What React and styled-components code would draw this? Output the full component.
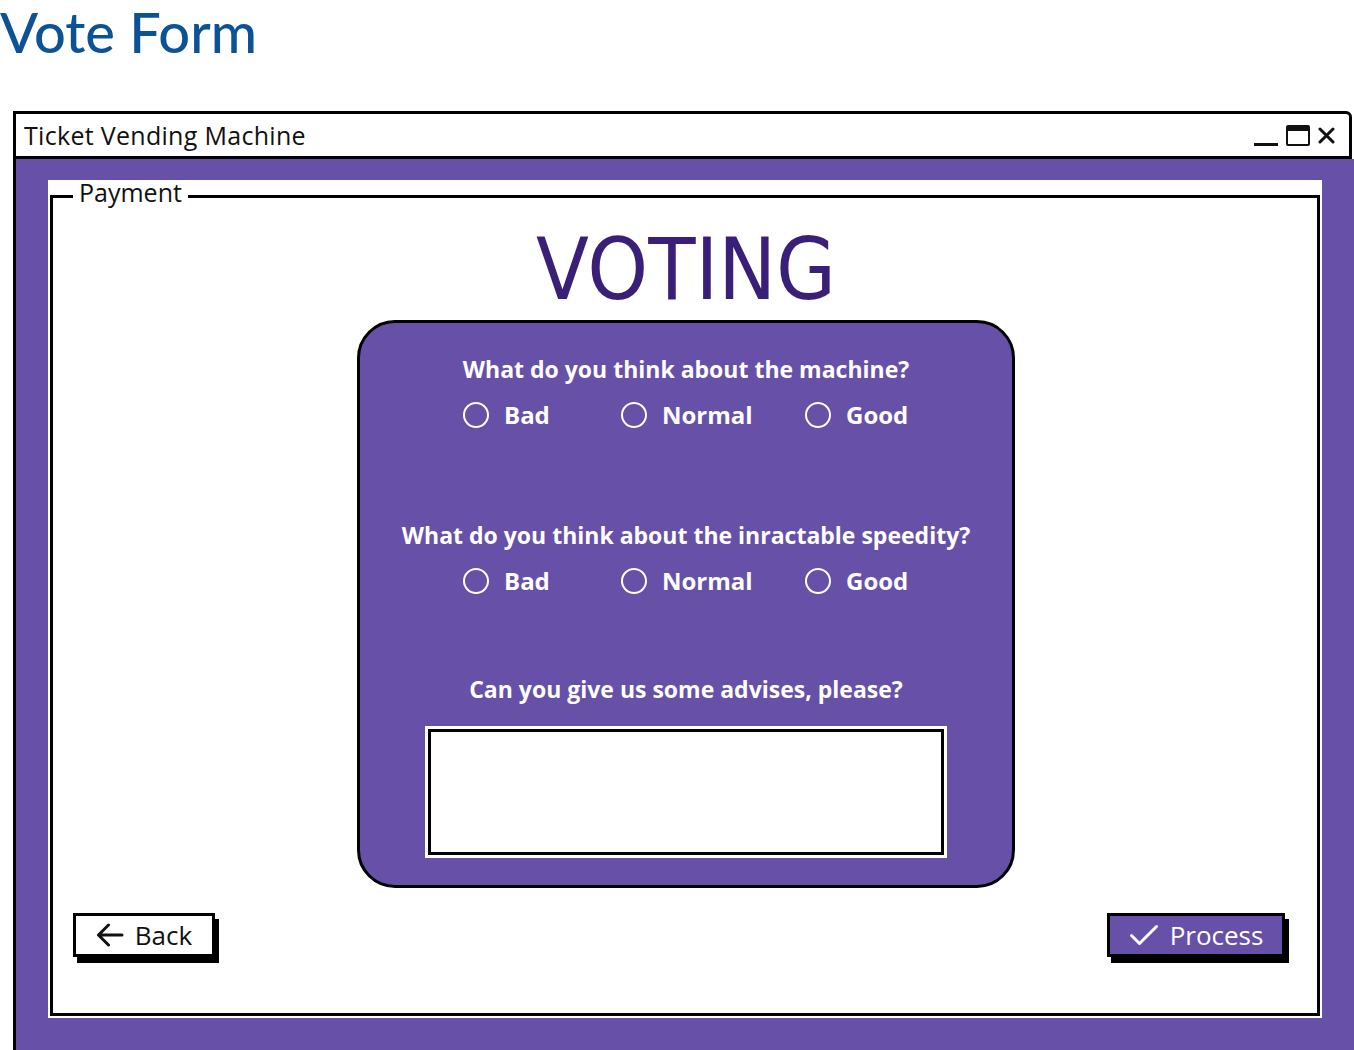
import React from "react";
import styled, { createGlobalStyle } from "styled-components";

const Global = createGlobalStyle`
  html, body { margin: 0; padding: 0; background: #fff; overflow: hidden; }
  body { font-family: "Open Sans", Lato, sans-serif; }
`;

const PURPLE = "#6750a8";

const Page = styled.div`
  width: 1354px;
  height: 1050px;
  display: flex;
  flex-direction: column;
`;

const PageTitle = styled.h1`
  margin: 0;
  height: 111px;
  font-family: Lato, sans-serif;
  font-weight: 500;
  font-size: 56px;
  line-height: 64px;
  color: #0b5394;
`;

const Window = styled.div`
  margin-left: 13px;
  display: flex;
  flex-direction: column;
  flex: 1;
`;

const TitleBar = styled.div`
  height: 42px;
  margin-right: 2px;
  border: 3px solid #000;
  border-top-right-radius: 6px;
  background: #fff;
  display: flex;
  align-items: center;
  justify-content: space-between;
  padding: 0 14px 0 8px;
  font-size: 25px;
  letter-spacing: 0.3px;
  color: #111;
`;

const Controls = styled.div`
  display: flex;
  align-items: center;
  gap: 8px;
`;

const WindowBody = styled.div`
  flex: 1;
  border-left: 3px solid #000;
  background: ${PURPLE};
  padding: 21px 32px 32px 32px;
  display: flex;
`;

const Panel = styled.div`
  width: 1274px;
  height: 838px;
  background: #fff;
  padding: 0 2px 2px;
  box-sizing: border-box;
  display: flex;
`;

const Fieldset = styled.fieldset`
  flex: 1;
  margin: 0;
  border: 3px solid #000;
  padding: 0 32px 53px 20px;
  display: flex;
  flex-direction: column;
  align-items: stretch;
  min-width: 0;
`;

const Legend = styled.legend`
  margin-left: 0;
  padding: 0 6px 8px;
  font-size: 25px;
  line-height: 24px;
  color: #111;
`;

const Voting = styled.h2`
  margin: 9px 0 0;
  padding-left: 14px;
  text-align: center;
  font-family: "DejaVu Sans Condensed", "DejaVu Sans", sans-serif;
  font-weight: normal;
  font-size: 86px;
  line-height: 96px;
  color: #3a1f78;
`;

const Card = styled.div`
  align-self: center;
  margin: 3px 0 0 14px;
  width: 658px;
  height: 568px;
  box-sizing: border-box;
  background: ${PURPLE};
  border: 3px solid #000;
  border-radius: 38px;
  display: flex;
  flex-direction: column;
  align-items: center;
  padding-top: 31px;
`;

const Question = styled.div`
  color: #fff;
  font-weight: 700;
  font-size: 23px;
  line-height: 30px;
`;

const RadioRow = styled.div`
  display: grid;
  grid-template-columns: 158px 184px auto;
  width: 446px;
  margin-top: 16px;
  margin-bottom: ${(p) => p.$after}px;
`;

const Option = styled.label`
  display: flex;
  align-items: center;
  gap: 15px;
  color: #fff;
  font-weight: 700;
  font-size: 24px;
  line-height: 30px;
`;

const Circle = styled.span`
  width: 22px;
  height: 22px;
  border: 2.5px solid #fff;
  border-radius: 50%;
`;

const Advice = styled.div`
  margin-top: 25px;
  width: 516px;
  height: 126px;
  box-sizing: border-box;
  background: #fff;
  border: 3px solid #000;
  box-shadow: 0 0 0 3px #fff;
`;

const Actions = styled.div`
  margin-top: 25px;
  display: flex;
  justify-content: space-between;
`;

const Button = styled.button`
  height: 44px;
  width: ${(p) => p.$w}px;
  box-sizing: border-box;
  border: 3px solid #000;
  box-shadow: 4px 6px 0 #000;
  background: ${(p) => (p.$primary ? PURPLE : "#fff")};
  color: ${(p) => (p.$primary ? "#fff" : "#111")};
  font-family: "Open Sans", sans-serif;
  font-size: 26px;
  display: flex;
  align-items: center;
  justify-content: center;
  gap: 11px;
  padding: 0;
`;

const MinIcon = styled.span`
  width: 24px;
  height: 3px;
  background: #111;
  margin-top: 19px;
`;

const MaxIcon = styled.span`
  width: 24px;
  height: 21px;
  box-sizing: border-box;
  border: 2.5px solid #111;
  border-top-width: 6px;
  border-radius: 2px;
`;

const IconSvg = styled.svg`
  display: block;
  fill: none;
  stroke: currentColor;
  stroke-linecap: round;
  stroke-linejoin: round;
`;

const options = ["Bad", "Normal", "Good"];

function Radios({ after }) {
  return (
    <RadioRow $after={after}>
      {options.map((o) => (
        <Option key={o}>
          <Circle />
          {o}
        </Option>
      ))}
    </RadioRow>
  );
}

export default function App() {
  return (
    <Page>
      <Global />
      <PageTitle>Vote Form</PageTitle>
      <Window>
        <TitleBar>
          <span>Ticket Vending Machine</span>
          <Controls>
            <MinIcon />
            <MaxIcon />
            <IconSvg width="17" height="17" viewBox="0 0 17 17" strokeWidth="3">
              <path d="M2 2 L15 15 M15 2 L2 15" />
            </IconSvg>
          </Controls>
        </TitleBar>
        <WindowBody>
          <Panel>
            <Fieldset>
              <Legend>Payment</Legend>
              <Voting>VOTING</Voting>
              <Card>
                <Question>What do you think about the machine?</Question>
                <Radios after={90} />
                <Question>What do you think about the inractable speedity?</Question>
                <Radios after={78} />
                <Question>Can you give us some advises, please?</Question>
                <Advice />
              </Card>
              <Actions>
                <Button $w={142}>
                  <IconSvg width="28" height="24" viewBox="0 0 28 24" strokeWidth="3">
                    <path d="M26 12 H2.5 M12.5 2 L2.5 12 L12.5 22" />
                  </IconSvg>
                  Back
                </Button>
                <Button $w={178} $primary>
                  <IconSvg width="30" height="22" viewBox="0 0 30 22" strokeWidth="3">
                    <path d="M2.5 11.5 L10.5 19.5 L27.5 2.5" />
                  </IconSvg>
                  Process
                </Button>
              </Actions>
            </Fieldset>
          </Panel>
        </WindowBody>
      </Window>
    </Page>
  );
}
